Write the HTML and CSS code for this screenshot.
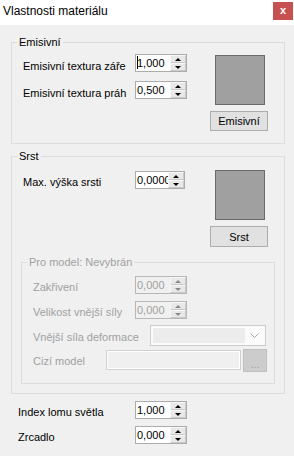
FILE: index.html
```html
<!DOCTYPE html>
<html lang="cs">
<head>
<meta charset="utf-8">
<title>Vlastnosti materiálu</title>
<link rel="stylesheet" href="styles.css">
</head>
<body>
<div class="window">
  <header class="titlebar">
    <span class="title">Vlastnosti materiálu</span>
    <span class="close">x</span>
  </header>
  <main class="content">
    <fieldset class="group g-emis">
      <legend>Emisivní</legend>
      <div class="group-body">
        <div class="fields">
          <div class="row">
            <label class="lbl">Emisivní textura záře</label>
            <div class="spin"><span class="val"><span class="caret"></span>1,000</span><span class="btns"><i class="up"></i><i class="dn"></i></span></div>
          </div>
          <div class="row">
            <label class="lbl">Emisivní textura práh</label>
            <div class="spin"><span class="val">0,500</span><span class="btns"><i class="up"></i><i class="dn"></i></span></div>
          </div>
        </div>
        <div class="colorpick">
          <div class="swatch"></div>
          <button class="btn">Emisivní</button>
        </div>
      </div>
    </fieldset>

    <fieldset class="group g-srst">
      <legend>Srst</legend>
      <div class="group-body srst-top">
        <div class="fields">
          <div class="row">
            <label class="lbl">Max. výška srsti</label>
            <div class="spin narrow"><span class="val">0,0000</span><span class="btns"><i class="up"></i><i class="dn"></i></span></div>
          </div>
        </div>
        <div class="colorpick">
          <div class="swatch"></div>
          <button class="btn btn-srst">Srst</button>
        </div>
      </div>

      <fieldset class="group inner disabled">
        <legend>Pro model: Nevybrán</legend>
        <div class="inner-body">
          <div class="row">
            <label class="lbl w102">Zakřivení</label>
            <div class="spin off"><span class="val">0,000</span><span class="btns"><i class="up"></i><i class="dn"></i></span></div>
          </div>
          <div class="row r2">
            <label class="lbl w102">Velikost vnější síly</label>
            <div class="spin off"><span class="val">0,000</span><span class="btns"><i class="up"></i><i class="dn"></i></span></div>
          </div>
          <div class="row r3">
            <label class="lbl w117">Vnější síla deformace</label>
            <div class="combo"><span class="combo-field"></span><svg class="chev" width="9" height="6" viewBox="0 0 9 6"><path d="M0.5 0.5 L4.5 4.5 L8.5 0.5" fill="none" stroke="#a8a8a8" stroke-width="1"/></svg></div>
          </div>
          <div class="row r4">
            <label class="lbl w73">Cizí model</label>
            <div class="textbox"></div>
            <button class="dots" disabled>...</button>
          </div>
        </div>
      </fieldset>
    </fieldset>

    <div class="bottom">
      <div class="row">
        <label class="lbl w117">Index lomu světla</label>
        <div class="spin"><span class="val">1,000</span><span class="btns"><i class="up"></i><i class="dn"></i></span></div>
      </div>
      <div class="row">
        <label class="lbl w117">Zrcadlo</label>
        <div class="spin"><span class="val">0,000</span><span class="btns"><i class="up"></i><i class="dn"></i></span></div>
      </div>
    </div>
  </main>
</div>
</body>
</html>
```

FILE: styles.css
```css
* { box-sizing: border-box; }

html, body {
  margin: 0;
  padding: 0;
  background: #f0f0f0;
}

body {
  font-family: "Liberation Sans", Arial, sans-serif;
  font-size: 11px;
  color: #000;
  width: 294px;
  height: 456px;
  overflow: hidden;
}

.window {
  display: flex;
  flex-direction: column;
  height: 456px;
}

.titlebar {
  height: 25px;
  background: #fff;
  display: flex;
  align-items: flex-start;
}

.title {
  font-size: 12px;
  line-height: 16px;
  padding: 3px 0 0 3px;
  flex: 1;
}

.close {
  width: 20px;
  height: 18px;
  margin: 2px 1px 0 0;
  background: #c75050;
  color: #fff;
  font-weight: bold;
  font-size: 11px;
  line-height: 16px;
  text-align: center;
}

.content {
  padding: 0 9px 0 11px;
  display: flex;
  flex-direction: column;
}

fieldset.group {
  margin: 0;
  padding: 0;
  border: 1px solid #dcdcdc;
  min-width: 0;
}

fieldset.group > legend {
  margin-left: 5px;
  padding: 0 2px;
  font-size: 11px;
  line-height: 14px;
}

.g-emis { margin-top: 10px !important; }
.g-srst { margin-top: 5px !important; }

.group-body {
  display: grid;
  grid-template-columns: 164px 58px;
  column-gap: 23px;
  padding: 5px 0 12px 11px;
}

.srst-top { padding-top: 7px; padding-bottom: 0; }

.fields {
  display: flex;
  flex-direction: column;
  gap: 9px;
}

.srst-top .fields { padding-top: 1px; }

.row {
  display: flex;
  align-items: flex-start;
  height: 18px;
}

.lbl {
  width: 112px;
  flex: none;
  line-height: 14px;
  margin-top: 4px;
  white-space: nowrap;
}

.g-emis .lbl { margin-top: 5px; }

.w102 { width: 102px; }
.w117 { width: 117px; }
.w73 { width: 73px; }

/* numeric up-down */
.spin {
  display: flex;
  width: 52px;
  height: 18px;
  border: 1px solid #acacac;
  background: #fff;
  flex: none;
}

.spin.narrow { width: 50px; }

.val {
  flex: 1;
  min-width: 0;
  overflow: hidden;
  white-space: nowrap;
  line-height: 16px;
  padding-left: 1px;
  position: relative;
}

.caret {
  display: inline-block;
  width: 1px;
  height: 13px;
  background: #000;
  vertical-align: -2px;
  margin-right: -1px;
}

.btns {
  width: 16px;
  flex: none;
  display: flex;
  flex-direction: column;
  padding: 0;
  gap: 0;
}

.btns i {
  flex: 1;
  display: flex;
  align-items: center;
  justify-content: center;
  background: #e8e8e8;
  border: 1px solid #c9c9c9;
  border-top-color: #f7f7f7;
  border-left-color: #f7f7f7;
}

.btns i::before {
  content: "";
  width: 0;
  height: 0;
  border-left: 3px solid transparent;
  border-right: 3px solid transparent;
}

.btns .up::before { border-bottom: 3px solid #000; }
.btns .dn::before { border-top: 3px solid #000; }

/* colour picker */
.colorpick {
  display: flex;
  flex-direction: column;
  align-items: center;
  padding-top: 1px;
}

.srst-top .colorpick { padding-top: 0; }

.swatch {
  width: 50px;
  height: 50px;
  margin-left: 2px;
  background: #a0a0a0;
  border: 1px solid #6a6a6a;
}

.btn {
  margin-top: 6px;
  width: 58px;
  height: 20px;
  border: 1px solid #adadad;
  background: #e1e1e1;
  font-family: inherit;
  font-size: 11px;
  color: #000;
  padding: 0;
  line-height: 18px;
}

.btn-srst { height: 21px; }

/* inner disabled group */
fieldset.inner {
  margin: 8px 9px 9px 9px;
}

.disabled, .disabled .lbl { color: #a0a0a0; }

.inner-body {
  display: flex;
  flex-direction: column;
  padding: 7px 0 11px 11px;
}

.inner-body .r2 { margin-top: 7px; }
.inner-body .r3 { margin-top: 6px; height: 21px; }
.inner-body .r4 { margin-top: 3px; height: 23px; }

.inner-body .r3 .lbl { margin-top: 5px; }
.inner-body .r4 .lbl { margin-top: 5px; }

.spin.off {
  border-color: #b7b7b7;
  background: #f0f0f0;
  color: #a0a0a0;
}

.spin.off .btns i::before { border-bottom-color: #888; border-top-color: #888; }
.spin.off .btns .up::before { border-top-color: transparent; }
.spin.off .btns .dn::before { border-bottom-color: transparent; }

.combo {
  width: 116px;
  height: 21px;
  border: 1px solid #cccccc;
  background: #fbfbfb;
  display: flex;
  align-items: center;
  padding: 2px;
}

.combo-field {
  flex: 1;
  height: 15px;
  background: #ececec;
}

.chev {
  margin: 0 4px 0 5px;
}

.textbox {
  width: 135px;
  height: 20px;
  margin-top: 1px;
  border: 1px solid #d0d0d0;
  background: #f0f0f0;
  box-shadow: inset 0 0 0 1px #fff;
}

.dots {
  margin-left: 2px;
  width: 24px;
  height: 23px;
  border: 1px solid #bfbfbf;
  background: #cccccc;
  color: #a0a0a0;
  font-family: inherit;
  font-size: 11px;
  padding: 6px 0 0 0;
  line-height: 14px;
}

/* bottom */
.bottom {
  display: flex;
  flex-direction: column;
  gap: 7px;
  padding: 7px 0 0 7px;
}
```
